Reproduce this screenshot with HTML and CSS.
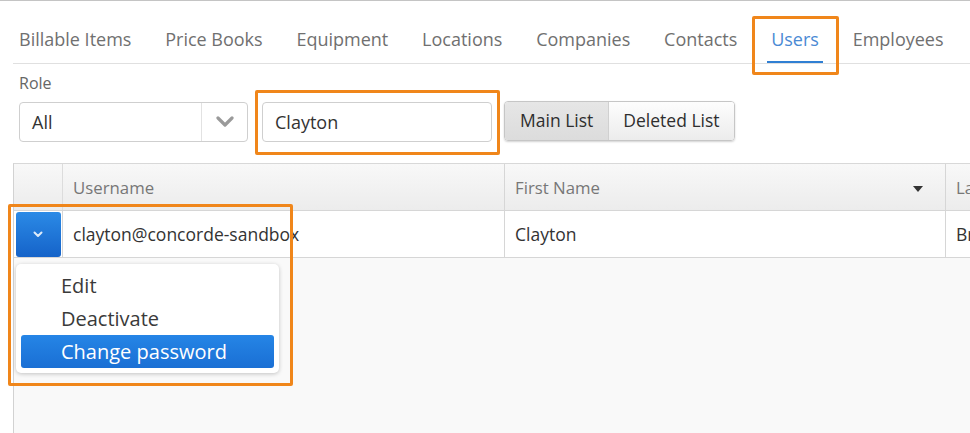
FILE: index.html
```html
<!DOCTYPE html>
<html lang="en">
<head>
  <meta charset="UTF-8">
  <title>Users</title>
  <link rel="stylesheet" href="styles.css">
</head>
<body>
  <div class="page">
    <ul class="tabs">
      <li class="tab">Billable Items</li>
      <li class="tab">Price Books</li>
      <li class="tab">Equipment</li>
      <li class="tab">Locations</li>
      <li class="tab">Companies</li>
      <li class="tab">Contacts</li>
      <li class="tab active">Users</li>
      <li class="tab">Employees</li>
    </ul>

    <div class="filters">
      <label class="field-label">Role</label>
      <div class="controls">
        <div class="select">
          <span class="select-value">All</span>
          <span class="select-arrow">
            <svg width="18" height="12" viewBox="0 0 18 12"><polyline points="2,2 9,9 16,2" fill="none" stroke="#9a9a9a" stroke-width="3.2" stroke-linecap="round" stroke-linejoin="round"/></svg>
          </span>
        </div>
        <div class="search">Clayton</div>
        <div class="btn-group">
          <span class="btn active">Main List</span>
          <span class="btn">Deleted List</span>
        </div>
      </div>
    </div>

    <div class="grid">
      <div class="grid-row grid-head">
        <div class="cell cell-action"></div>
        <div class="cell cell-user">Username</div>
        <div class="cell cell-first">First Name
          <svg class="sort" width="10" height="6" viewBox="0 0 10 6"><polygon points="0,0 10,0 5,6" fill="#333"/></svg>
        </div>
        <div class="cell cell-last">Last Name</div>
      </div>
      <div class="grid-row grid-data">
        <div class="cell cell-action">
          <span class="row-btn">
            <svg width="10" height="7" viewBox="0 0 10 7"><polyline points="1.5,1.5 5,5 8.5,1.5" fill="none" stroke="#fff" stroke-width="2" stroke-linecap="round" stroke-linejoin="round" opacity="0.85"/></svg>
          </span>
        </div>
        <div class="cell cell-user">clayton@concorde-sandbox</div>
        <div class="cell cell-first">Clayton</div>
        <div class="cell cell-last">Brown</div>
      </div>
      <div class="grid-body"></div>

      <ul class="menu">
        <li class="menu-item">Edit</li>
        <li class="menu-item">Deactivate</li>
        <li class="menu-item selected">Change password</li>
      </ul>
    </div>

    <!-- highlight frames -->
    <div class="mark mark-tab"></div>
    <div class="mark mark-search"></div>
    <div class="mark mark-row"></div>
  </div>
</body>
</html>
```

FILE: styles.css
```css
* {
  box-sizing: border-box;
}

body {
  margin: 0;
  font-family: "Open Sans", "Liberation Sans", sans-serif;
  background: #fff;
  color: #333;
}

.page {
  position: relative;
  height: 433px;
  overflow: hidden;
  display: flex;
  flex-direction: column;
  border-top: 1px solid #c4c4c4;
}

/* tabs */
.tabs {
  list-style: none;
  margin: 0 0 0 13px;
  padding: 0 0 0 2px;
  display: flex;
  gap: 25.8px;
  border-bottom: 1px solid #e0e0e0;
}

.tab {
  padding: 26px 4px 10px;
  line-height: 24px;
  font-size: 18px;
  color: #707070;
  border-bottom: 2px solid transparent;
  white-space: nowrap;
}

.tab.active {
  color: #4a8ad4;
  border-bottom-color: #2f7fd3;
}

/* filter bar */
.filters {
  padding: 8px 0 0 19px;
}

.field-label {
  display: block;
  font-size: 16px;
  line-height: 22px;
  color: #666;
}

.controls {
  display: flex;
  align-items: flex-start;
  margin-top: 8px;
}

.select {
  width: 229px;
  height: 40px;
  border: 1px solid #cfcfcf;
  border-radius: 4px;
  display: flex;
  align-items: stretch;
}

.select-value {
  flex: 1;
  padding-left: 12px;
  font-size: 18px;
  line-height: 38px;
  color: #333;
}

.select-arrow {
  width: 46px;
  border-left: 1px solid #e2e2e2;
  display: flex;
  align-items: center;
  justify-content: center;
}

.search {
  width: 230px;
  height: 40px;
  margin-left: 14px;
  border: 1px solid #cfcfcf;
  border-radius: 4px;
  padding-left: 12px;
  font-size: 18px;
  line-height: 38px;
  color: #333;
}

.btn-group {
  display: flex;
  margin-left: 12px;
  margin-top: -1px;
  border: 1px solid #c6c6c6;
  border-radius: 4px;
  box-shadow: 0 1px 2px rgba(0, 0, 0, 0.18);
  overflow: hidden;
}

.btn {
  height: 38px;
  line-height: 37px;
  font-size: 17.5px;
  color: #2e2e2e;
  padding: 0 14px;
  background: linear-gradient(#fdfdfd, #ececec);
}

.btn + .btn {
  border-left: 1px solid #d0d0d0;
}

.btn.active {
  background: linear-gradient(#e6e6e6, #dcdcdc);
  padding: 0 15px;
}

/* grid */
.grid {
  position: relative;
  flex: 1;
  margin: 21px 0 0 13px;
  border-left: 1px solid #d2d2d2;
  border-top: 1px solid #d8d8d8;
  display: flex;
  flex-direction: column;
}

.grid-row {
  display: flex;
  height: 47px;
  border-bottom: 1px solid #d6d6d6;
}

.grid-head {
  background: linear-gradient(#f8f8f8, #ececec);
  color: #777;
}

.grid-data {
  background: #fff;
  color: #333;
}

.cell {
  flex: none;
  display: flex;
  align-items: center;
  padding: 0 10px;
  font-size: 16.8px;
  border-right: 1px solid #d6d6d6;
  white-space: nowrap;
  overflow: hidden;
}

.grid-data .cell {
  font-size: 17.5px;
}

.cell-action {
  width: 49px;
  padding: 0;
  justify-content: center;
}

.cell-user {
  width: 442px;
}

.cell-first {
  width: 441px;
  justify-content: space-between;
  padding-right: 22px;
}

.cell-last {
  flex: 1;
  border-right: none;
}

.grid-head .cell-action {
  border-right-color: #dcdcdc;
}

.sort {
  margin-top: 4px;
}

.row-btn {
  width: 45px;
  height: 45px;
  border-radius: 3px;
  background: linear-gradient(#2b8ae6, #1563c9);
  display: flex;
  align-items: center;
  justify-content: center;
}

.grid-body {
  flex: 1;
  background: #f9f9f9;
}

/* row action menu */
.menu {
  position: absolute;
  left: 2px;
  top: 100px;
  width: 263px;
  margin: 0;
  padding: 5px 5px;
  list-style: none;
  background: #fff;
  border-radius: 5px;
  box-shadow: 0 1px 4px rgba(0, 0, 0, 0.22);
}

.menu-item {
  height: 33px;
  line-height: 33px;
  padding-left: 40px;
  font-size: 20px;
  color: #3a3a3a;
  border-radius: 3px;
}

.menu-item.selected {
  background: linear-gradient(#2585e6, #1a6fd4);
  color: #fff;
}

/* orange highlight frames */
.mark {
  position: absolute;
  border: 3px solid #f0861a;
  border-radius: 2px;
  pointer-events: none;
}

.mark-tab {
  left: 752px;
  top: 15px;
  width: 87px;
  height: 59px;
}

.mark-search {
  left: 255px;
  top: 89px;
  width: 245px;
  height: 65px;
}

.mark-row {
  left: 8px;
  top: 203px;
  width: 285px;
  height: 182px;
}
```
